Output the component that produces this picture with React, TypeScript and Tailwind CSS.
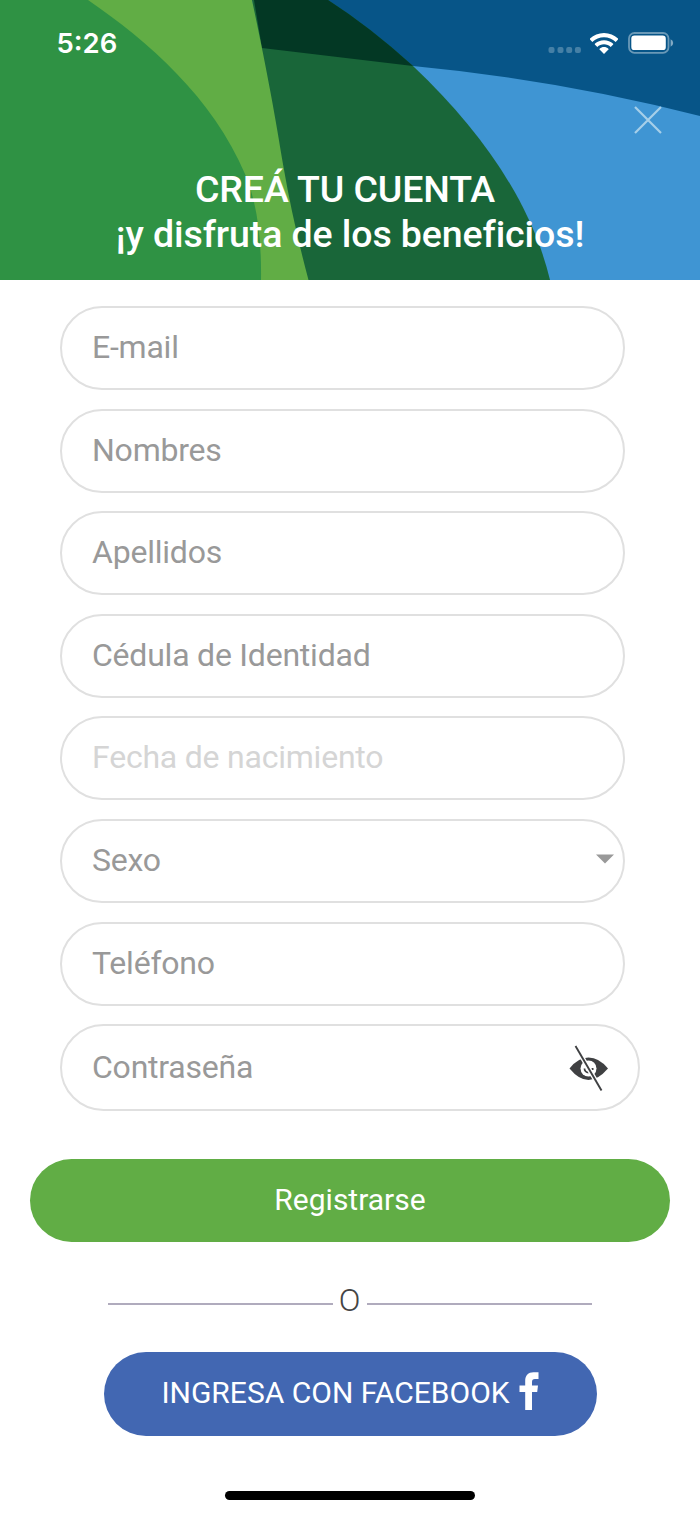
import { clsx } from "clsx";

interface Field {
  id: string;
  label: string;
  faded?: boolean;
  type?: "select" | "password";
}

const fields: Field[] = [
  { id: "email", label: "E-mail" },
  { id: "nombres", label: "Nombres" },
  { id: "apellidos", label: "Apellidos" },
  { id: "cedula", label: "Cédula de Identidad" },
  { id: "nacimiento", label: "Fecha de nacimiento", faded: true },
  { id: "sexo", label: "Sexo", type: "select" },
  { id: "telefono", label: "Teléfono" },
  { id: "password", label: "Contraseña", type: "password" },
];

const HeaderBackground = () => (
  <svg viewBox="0 0 700 280" className="absolute inset-0 w-full h-full">
    <rect width="700" height="280" fill="#3f95d3" />
    <path d="M250 0H700V116Q560 80 413 66L262 48Z" fill="#075588" />
    {/* Verde oscuro */}
    <path d="M252 0H328Q370 27 413 66C484 133 532 205 550 280H300Z" fill="#196639" />
    <path d="M254 0H328Q370 27 413 66L262 48Z" fill="#033824" />
    {/* Verde claro y medio */}
    <path d="M80 0H252C267 71 275 114 283.500 167Q293 222 308.500 280H200Z" fill="#61ad45" />
    <path d="M0 0H88C148 41 213 98 245 174Q262 214 261 280H0Z" fill="#2f9244" />
  </svg>
);

const StatusBar = () => (
  <div className="relative flex justify-between items-center h-[86px] pl-[56.500px] pr-[26px] text-white">
    <span className="font-['Inter'] font-semibold text-[27.500px] pt-[1px]">5:26</span>

    <div className="flex items-center">
      <svg width="34" height="8" viewBox="0 0 34 8" className="mt-[14px] mr-[8px] opacity-25">
        {[0, 9, 17.7, 26.4].map((x) => (
          <rect key={x} x={x + 0.5} y="1" width="6" height="6" rx="2" fill="#fff" />
        ))}
      </svg>
      <svg width="28" height="21" viewBox="0 0 28 21" className="mr-[10px]">
        <path d="M14 0C19.5 0 24.3 2.1 28 5.4V6.6L25.7 8.9C22.5 6 18.4 4.3 14 4.3S5.5 6 2.3 8.9L0 6.6V5.4C3.7 2.1 8.5 0 14 0Z" fill="#fff" />
        <path d="M14 7.2C17.5 7.2 20.7 8.5 23.2 10.7V11.5L20.7 13.9C18.9 12.2 16.6 11.3 14 11.3S9.1 12.2 7.3 13.9L4.8 11.5V10.7C7.3 8.5 10.5 7.2 14 7.2Z" fill="#fff" />
        <path d="M14 14.1C15.7 14.1 17.2 14.7 18.4 15.8V16.5L14 21L9.6 16.5V15.8C10.8 14.7 12.3 14.1 14 14.1Z" fill="#fff" />
      </svg>
      <svg width="46" height="22" viewBox="0 0 46 22">
        <rect x="1" y="1" width="39.5" height="19.8" rx="5.5" fill="none" stroke="#fff" strokeWidth="1.8" opacity=".4" />
        <rect x="3.3" y="3.6" width="34.5" height="14.5" rx="3.2" fill="#fff" />
        <path d="M42.6 7.3Q45.2 8.4 45.2 11T42.6 14.7Z" fill="#fff" opacity=".5" />
      </svg>
    </div>
  </div>
);

const EyeOff = () => (
  <svg width="40" height="46" viewBox="0 0 40 46">
    <path d="M.5 23.500Q9 12.500 19.500 12.500T39 23.500Q29 35 19.500 35T.5 23.500Z" fill="#3f4042" />
    <circle cx="19.500" cy="23.500" r="8" fill="#fff" />
    <path d="M15.500 23.500a4 4 0 0 0 4 4M22.500 24h2" fill="none" stroke="#3f4042" strokeWidth="1.800" />
    <path d="M6.500 1L32.500 45.500" stroke="#fff" strokeWidth="4.500" />
    <path d="M6.500 1L32.500 45.500" stroke="#3f4042" strokeWidth="1.900" />
  </svg>
);

const FacebookIcon = () => (
  <svg width="20" height="38" viewBox="0 0 20 38" fill="#fff" className="-mt-[5px]">
    <path d="M6.200 38V20H.500V13.500H6.200V9C6.200 3.500 9.300.300 14.500.300H19.500V7H16C13.800 7 13 8 13 10V13.500H19L18.200 20H13V38Z" />
  </svg>
);

const FormField = ({ label, faded, type }: Field) => {
  const isPassword = type === "password";

  return (
    <div
      className={clsx(
        "flex justify-between items-center pl-[30px] rounded-full border-2 border-[#e0e0e0]",
        isPassword ? "h-[87px] w-[580px] pr-[29px]" : "h-[84px] w-[565px] pr-[8.500px]",
      )}
    >
      <span
        className={clsx(
          "-mt-[2px] text-[32px] leading-[38px] tracking-[-0.22px]",
          faded ? "text-[#d5d5d5]" : "text-[#999]",
        )}
      >
        {label}
      </span>
      {type === "select" && (
        <svg width="20" height="10" viewBox="0 0 20 10" className="-mt-[3px]">
          <path d="M1 .5H19L10 9.5Z" fill="#999" />
        </svg>
      )}
      {isPassword && <EyeOff />}
    </div>
  );
};

export default function App() {
  return (
    <div className="w-[700px] h-[1515px] bg-white font-['Roboto',sans-serif] overflow-hidden">
      <header className="relative h-[280px]">
        <HeaderBackground />
        <StatusBar />

        <div className="relative flex justify-end pt-[20px] pr-[38px]">
          <button className="block cursor-pointer" aria-label="Cerrar">
            <svg width="28" height="28" viewBox="0 0 28 28">
              <path d="M1 1L27 27M27 1L1 27" stroke="#a6cfe9" strokeWidth="2.200" />
            </svg>
          </button>
        </div>

        <h1 className="relative mt-[33px] text-center text-white text-[37.500px] leading-[45px] font-medium tracking-[-0.1px]">
          <span className="block pr-[10px]">CREÁ TU CUENTA</span>
          <span className="block">¡y disfruta de los beneficios!</span>
        </h1>
      </header>

      <form className="flex flex-col gap-[18.600px] pt-[26px] pl-[60px]">
        {fields.map((field) => (
          <FormField key={field.id} {...field} />
        ))}
      </form>

      <div className="flex flex-col items-center pt-[47.500px]">
        <button className="w-[640px] h-[83px] pb-[2px] rounded-full bg-[#61ad45] text-white text-[30px] cursor-pointer">
          Registrarse
        </button>

        <div className="flex items-center mt-[38px] h-[40px] w-[484px] text-[#444]">
          <span className="flex-1 h-[2px] mt-[9px] bg-[#b0abbd]" />
          <span className="w-[34px] pr-[1px] text-center text-[32px] leading-[40px] font-light">O</span>
          <span className="flex-1 h-[2px] mt-[9px] bg-[#b0abbd]" />
        </div>

        <button className="flex justify-center items-center gap-[9px] w-[493px] h-[84px] mt-[32px] rounded-full bg-[#4267b2] text-white cursor-pointer">
          <span className="-mt-[2px] text-[30px]">INGRESA CON FACEBOOK</span>
          <FacebookIcon />
        </button>

        <div className="w-[250px] h-[9px] mt-[55px] rounded-full bg-black" />
      </div>
    </div>
  );
}
